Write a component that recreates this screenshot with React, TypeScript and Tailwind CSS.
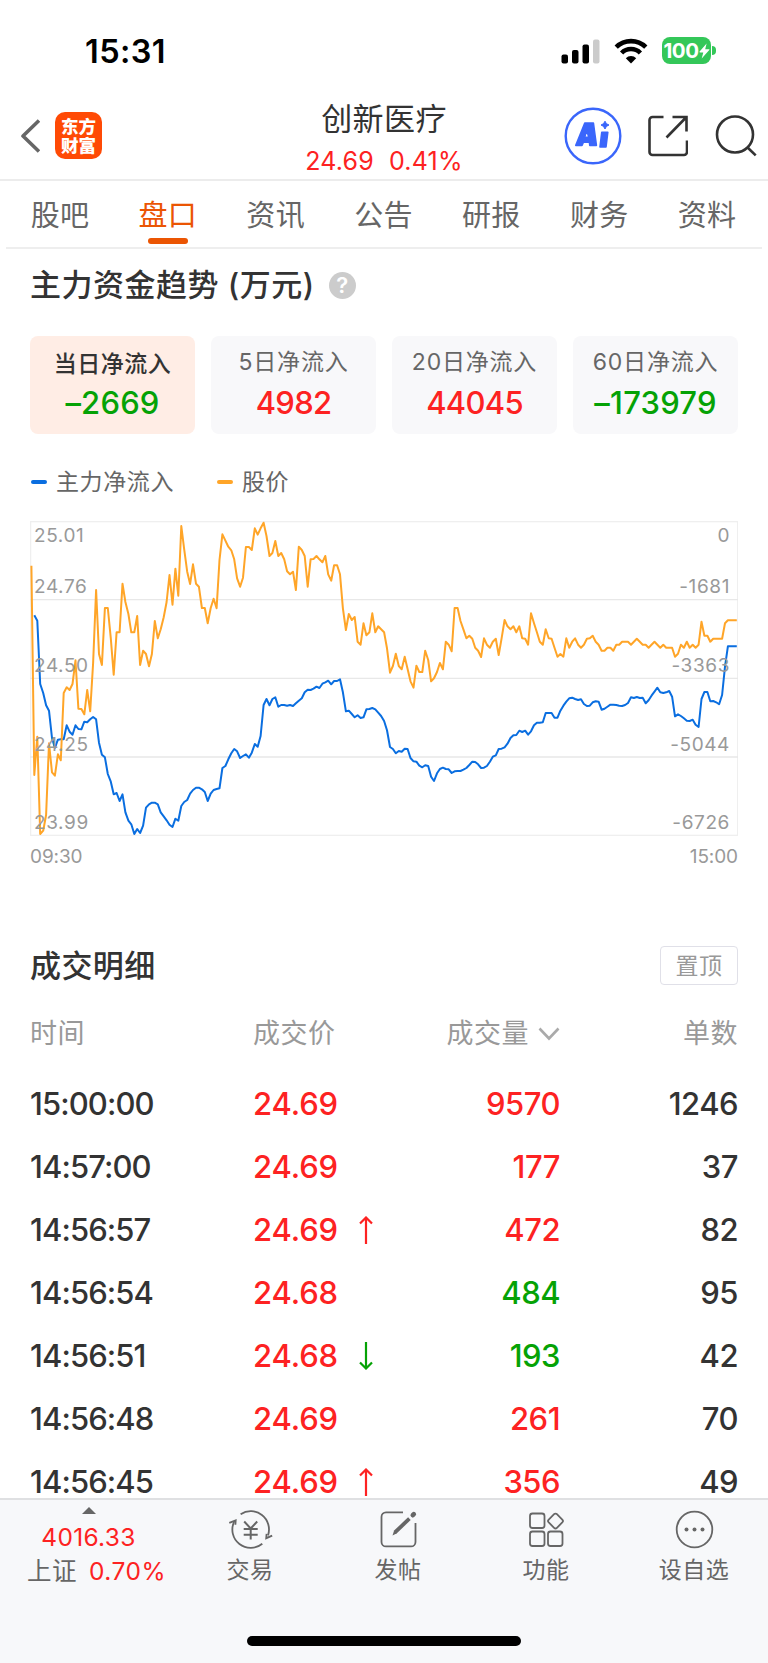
import type { ReactNode } from "react";
import clsx from "clsx";

const tabs = ["股吧", "盘口", "资讯", "公告", "研报", "财务", "资料"];

const flowCards = [
  { label: "当日净流入", value: "–2669", up: false, active: true },
  { label: "5日净流入", value: "4982", up: true, active: false },
  { label: "20日净流入", value: "44045", up: true, active: false },
  { label: "60日净流入", value: "–173979", up: false, active: false },
];

const trades = [
  { time: "15:00:00", price: "24.69", move: "", volume: "9570", buy: true, count: "1246" },
  { time: "14:57:00", price: "24.69", move: "", volume: "177", buy: true, count: "37" },
  { time: "14:56:57", price: "24.69", move: "up", volume: "472", buy: true, count: "82" },
  { time: "14:56:54", price: "24.68", move: "", volume: "484", buy: false, count: "95" },
  { time: "14:56:51", price: "24.68", move: "down", volume: "193", buy: false, count: "42" },
  { time: "14:56:48", price: "24.69", move: "", volume: "261", buy: true, count: "70" },
  { time: "14:56:45", price: "24.69", move: "up", volume: "356", buy: true, count: "49" },
];

// one value per trading minute, in chart units from the top
const priceSeries = [
  167, 795, 680, 972, 962, 915, 700, 787, 797, 733, 751, 549, 532, 540, 522, 451, 596, 597, 613, 540,
  604, 460, 240, 432, 465, 294, 294, 385, 494, 367, 367, 221, 276, 312, 367, 367, 318, 465, 422, 432,
  469, 432, 333, 385, 358, 322, 276, 195, 284, 176, 257, 48, 118, 185, 222, 163, 221, 230, 294, 294,
  340, 294, 266, 295, 150, 73, 92, 110, 121, 148, 205, 230, 203, 111, 111, 120, 55, 74, 55, 38,
  78, 138, 129, 93, 138, 129, 148, 184, 193, 185, 240, 110, 120, 138, 230, 148, 147, 138, 148, 157,
  138, 193, 212, 166, 166, 193, 295, 360, 312, 330, 321, 395, 404, 340, 376, 367, 310, 367, 349, 358,
  367, 415, 488, 468, 431, 468, 478, 440, 477, 514, 533, 467, 486, 486, 422, 450, 514, 505, 486, 459,
  478, 395, 404, 424, 294, 294, 333, 358, 385, 377, 386, 413, 422, 441, 385, 404, 413, 395, 386, 435,
  385, 330, 349, 358, 349, 367, 349, 385, 386, 404, 310, 340, 367, 395, 404, 358, 385, 386, 413, 440,
  432, 440, 385, 413, 395, 385, 404, 413, 404, 386, 385, 377, 395, 404, 422, 422, 413, 413, 422, 404,
  404, 395, 395, 395, 404, 395, 386, 395, 404, 404, 413, 404, 395, 404, 413, 404, 413, 413, 413, 440,
  431, 404, 413, 395, 413, 404, 413, 404, 335, 377, 377, 395, 386, 386, 386, 386, 340, 331, 331, 331,
  331,
];

const flowSeries = [
  316, 332, 522, 549, 586, 602, 684, 714, 689, 688, 688, 646, 665, 674, 646, 657, 658, 635, 637, 628,
  621, 628, 698, 734, 742, 792, 815, 853, 849, 873, 853, 907, 932, 943, 972, 957, 969, 947, 893, 883,
  878, 878, 883, 907, 919, 931, 944, 951, 926, 932, 888, 876, 870, 851, 840, 833, 833, 838, 846, 873,
  851, 840, 837, 835, 774, 768, 748, 730, 717, 724, 744, 738, 733, 743, 728, 702, 710, 678, 585, 567,
  586, 567, 562, 590, 585, 585, 587, 585, 588, 580, 572, 565, 547, 539, 540, 536, 530, 534, 521, 517,
  512, 523, 513, 513, 508, 547, 604, 602, 612, 622, 616, 624, 622, 598, 597, 594, 598, 608, 618, 633,
  661, 711, 717, 730, 723, 725, 716, 717, 744, 754, 755, 767, 772, 766, 768, 800, 813, 790, 777, 773,
  777, 778, 789, 784, 783, 783, 779, 774, 765, 755, 756, 763, 774, 773, 768, 755, 740, 736, 717, 716,
  712, 701, 684, 676, 675, 662, 666, 662, 674, 664, 646, 638, 638, 637, 609, 609, 609, 623, 623, 602,
  587, 575, 565, 563, 567, 570, 568, 582, 588, 587, 577, 574, 575, 599, 596, 590, 584, 584, 585, 587,
  588, 585, 579, 562, 564, 561, 564, 563, 580, 571, 557, 545, 533, 547, 549, 547, 543, 560, 619, 613,
  618, 625, 632, 633, 629, 644, 651, 567, 546, 546, 574, 573, 577, 583, 555, 470, 409, 409, 409, 409,
];

const toPoints = (series: number[], start: number) =>
  series
    .map((y, i) => `${(1.4 + (i + start) * 2.939).toFixed(1)},${((y - 33) / 3).toFixed(1)}`)
    .join(" ");

const StatusBar = () => (
  <div className="flex h-24 items-start justify-between pt-8 pr-[52px] pl-[85px]">
    <span className="pt-[1px] text-[32.5px] leading-[38px] font-semibold tracking-[0.4px] text-black">15:31</span>
    <div className="flex items-center pt-[5px]">
      <svg className="mr-[13px]" width="40" height="26" viewBox="0 0 40 26">
        <rect x="0.5" y="16.5" width="6.5" height="9" rx="2" />
        <rect x="11" y="12" width="6.5" height="13.5" rx="2" />
        <rect x="21.5" y="6.5" width="6.5" height="19" rx="2" />
        <rect x="32" y="1.5" width="6.5" height="24" rx="2" fill="#cbcbcb" />
      </svg>
      <svg className="mr-[14px]" width="34" height="26" viewBox="0 0 34 26">
        <g fill="none" stroke="#000" strokeWidth="4.6">
          <path d="M2.2 9.2a21 21 0 0 1 29.6 0" />
          <path d="M7.6 15a13.2 13.2 0 0 1 18.8 0" />
        </g>
        <path d="M11.8 20.2a7.4 7.4 0 0 1 10.4 0L17 25.5z" />
      </svg>
      <div className="flex items-center gap-[1px]">
        <div className="flex h-[27px] w-[49px] items-center justify-center rounded-[8px] bg-[#34c759] text-white">
          <span className="text-[20.5px] leading-[27px] font-bold tracking-[-0.5px]">100</span>
          <svg width="11" height="16" viewBox="0 0 11 16" fill="currentColor">
            <path d="M7.6 0.4 0.6 8.6c-.3.4-.1.8.4.8h3.3L2.7 15.4l7.6-8.3c.3-.4.1-.8-.4-.8H6.2z" />
          </svg>
        </div>
        <span className="h-[9px] w-[4px] rounded-r-full bg-[#34c759]" />
      </div>
    </div>
  </div>
);

const Header = () => (
  <header className="grid h-[85px] grid-cols-[1fr_auto_1fr] border-b-2 border-[#ececec]">
    <div className="flex items-start gap-[15px] pt-4 pl-[20px]">
      <svg className="mt-[6px]" width="20" height="36" viewBox="0 0 20 36" fill="none" stroke="#666" strokeWidth="3.6">
        <path d="M19 2.5 3 18l16 15.5" strokeLinejoin="round" />
      </svg>
      <div className="flex h-[47px] w-[47px] flex-col items-center justify-center rounded-[10px] bg-[#ff4a05] text-[17.5px] leading-[19px] font-black text-white">
        <span>东方</span>
        <span>财富</span>
      </div>
    </div>
    <div className="flex flex-col items-center pt-[3px]">
      <h1 className="text-[31px] leading-[40px] tracking-[0.4px] text-[#333]">创新医疗</h1>
      <div className="flex gap-[15px] pt-[6px] text-[25px] leading-[32px] tracking-[0.2px] text-[#fd2222]">
        <span>24.69</span>
        <span>0.41%</span>
      </div>
    </div>
    <div className="flex items-start justify-end pt-[11px] pr-[11px]">
      <svg width="58" height="58" viewBox="0 0 58 58">
        <circle cx="29" cy="29" r="27.3" fill="none" stroke="#3a66fb" strokeWidth="2.4" />
        <g fill="#3a66fb" stroke="#3a66fb" strokeWidth="1.6" strokeLinejoin="round">
          <path fillRule="evenodd" d="M20.8 16h8.6L32.4 38.4h-6.6l-.4-3.2h-6l-1.4 3.2H11.8zM22.8 23.4l-2.2 6.8h4.2z" />
          <path d="M37.8 25.2h6L42 40h-6z" />
          <path d="M41 14.2l1.4 2.5 2.6 1.3-2.6 1.4L41 22l-1.5-2.6L37 18l2.5-1.3z" strokeWidth="1" />
        </g>
      </svg>
      <svg className="mt-[8px] ml-[26px]" width="40" height="42" viewBox="0 0 40 42" fill="none" stroke="#333" strokeWidth="2.6">
        <path d="M15.5 2H4.5a3 3 0 0 0-3 3v32a3 3 0 0 0 3 3h31.5a3 3 0 0 0 3-3V25.5" />
        <path d="M24.5 2H38.5V16.5M38.5 2 18.5 22.5" />
      </svg>
      <svg className="mt-[7px] ml-[27px]" width="42" height="43" viewBox="0 0 42 43" fill="none" stroke="#333" strokeWidth="2.6">
        <circle cx="20" cy="20.5" r="18" />
        <path d="M32.3 33.2l8.4 8.2" />
      </svg>
    </div>
  </header>
);

const Tabs = () => (
  <nav className="mr-[6px] ml-[6px] flex h-[68px] border-b-2 border-[#eee] pr-[1px]">
    {tabs.map((tab) => (
      <div
        key={tab}
        className={clsx(
          "flex flex-1 flex-col items-center pt-[15px] text-[29px] leading-10 tracking-[0.3px]",
          tab === "盘口" ? "text-[#eb5503]" : "text-[#666]"
        )}
      >
        {tab}
        {tab === "盘口" && <span className="mt-[2px] h-[6px] w-10 rounded-full bg-[#eb5503]" />}
      </div>
    ))}
  </nav>
);

const FlowCards = () => (
  <div className="grid grid-cols-4 gap-4 pt-[31px]">
    {flowCards.map((card) => (
      <div
        key={card.label}
        className={clsx(
          "flex h-[98px] flex-col items-center rounded-lg",
          card.active ? "bg-[#ffede5] pt-[13px]" : "bg-[#f8f8fa] pt-[11px]"
        )}
      >
        <span
          className={clsx(
            "text-[23px] leading-[30px]",
            card.active ? "font-medium tracking-[0.5px] text-[#333]" : "tracking-[0.8px] text-[#666]"
          )}
        >
          {card.label}
        </span>
        <span
          className={clsx(
            "text-[31px] leading-9 font-medium",
            card.active ? "mt-[6px]" : "mt-[8px]",
            card.up ? "tracking-[-0.7px] text-[#fd2222]" : "tracking-[0.2px] text-[#05a205]"
          )}
        >
          {card.value}
        </span>
      </div>
    ))}
  </div>
);

const Chart = () => (
  <div className="pt-[23px]">
    <div className="relative h-[315px] text-[19px] leading-6 text-[#999]">
      <svg className="block" width="708" height="315" viewBox="0 0 708 315" fill="none">
        <g stroke="#e8e8e8" strokeWidth="1.3">
          <rect x="0.6" y="0.7" width="707" height="313.6" stroke="#efefef" />
          <path d="M0 78.6H708M0 157.3H708M0 236H708" />
        </g>
        <polyline points={toPoints(flowSeries, 1)} stroke="#0a6ee0" strokeWidth="2" strokeLinejoin="round" />
        <polyline points={toPoints(priceSeries, 0)} stroke="#ffa528" strokeWidth="2" strokeLinejoin="round" />
      </svg>
      {/* axis labels lie over the lines */}
      <div className="absolute inset-0 flex justify-between pr-[8px] pl-[4px] tracking-[0.6px]">
        <div className="flex flex-col pt-[3px]">
          <span>25.01</span>
          <span className="pt-[27px]">24.76</span>
          <span className="pt-[55px]">24.50</span>
          <span className="pt-[55px]">24.25</span>
          <span className="pt-[54px]">23.99</span>
        </div>
        <div className="flex flex-col items-end pt-[3px]">
          <span>0</span>
          <span className="pt-[27px]">-1681</span>
          <span className="pt-[55px]">-3363</span>
          <span className="pt-[55px]">-5044</span>
          <span className="pt-[54px]">-6726</span>
        </div>
      </div>
    </div>
    <div className="flex justify-between pt-[9px] text-[19px] leading-6 tracking-[-0.1px] text-[#999]">
      <span>09:30</span>
      <span>15:00</span>
    </div>
  </div>
);

const MoveArrow = ({ move }: { move: string }) => (
  <svg
    className={clsx("ml-[21px]", move === "up" ? "text-[#fd2222]" : "rotate-180 text-[#05a205]")}
    width="14"
    height="28"
    viewBox="0 0 14 28"
    fill="none"
    stroke="currentColor"
    strokeWidth="2.2"
  >
    <path d="M7 28V2M1 7.5 7 1.5l6 6" />
  </svg>
);

const Trades = () => (
  <section className="px-[30px] pt-[77px]">
    <div className="flex h-[39px] items-center justify-between">
      <h2 className="text-[31px] leading-10 font-medium tracking-[0.4px] text-[#333]">成交明细</h2>
      <button className="h-[39px] w-[78px] rounded-[4px] border border-[#e0e0e8] text-[23px] leading-9 tracking-[0.5px] text-[#999]">
        置顶
      </button>
    </div>
    <div className="mt-[29px] grid grid-cols-[223px_147px_160px_178px] text-[27px] leading-10 tracking-[0.5px] text-[#999]">
      <span>时间</span>
      <span>成交价</span>
      <span className="flex items-center justify-end gap-[9px]">
        成交量
        <svg width="22" height="14" viewBox="0 0 22 14" fill="none" stroke="#aaa" strokeWidth="2.6">
          <path d="M1.5 1.5 11 11.5l9.5-10" />
        </svg>
      </span>
      <span className="text-right">单数</span>
    </div>
    <div className="mt-[18px] h-[426px] overflow-hidden">
      {trades.map((trade) => (
        <div
          key={trade.time}
          className="grid h-[63px] grid-cols-[223px_147px_160px_178px] items-center text-[31px] leading-9 font-medium tracking-[-0.5px] text-[#333]"
        >
          <span className="tracking-[-0.9px]">{trade.time}</span>
          <span className="flex items-center tracking-[-0.1px] text-[#fd2222]">
            {trade.price}
            {trade.move && <MoveArrow move={trade.move} />}
          </span>
          <span className={clsx("text-right", trade.buy ? "text-[#fd2222]" : "text-[#05a205]")}>{trade.volume}</span>
          <span className="text-right">{trade.count}</span>
        </div>
      ))}
    </div>
  </section>
);

const NavItem = ({ label, children }: { label: string; children: ReactNode }) => (
  <div className="flex w-[148px] flex-col items-center pt-[9px] text-[23px] leading-8 tracking-[0.5px] text-[#666]">
    <svg width="45" height="42" viewBox="0 0 45 42" fill="none" stroke="#666" strokeWidth="1.8">
      {children}
    </svg>
    <span className="pt-[3px]">{label}</span>
  </div>
);

const BottomBar = () => (
  <footer className="h-[165px] border-t-2 border-[#dfe0e2] bg-[#f7f8fa]">
    <div className="flex h-[136px]">
      <div className="flex w-44 flex-col items-center pt-[7px] pl-[1px] text-[#fd2222]">
        <svg width="14" height="7" viewBox="0 0 14 7" fill="#666">
          <path d="M7 0l7 7H0z" />
        </svg>
        <span className="pt-[8px] text-[24.5px] leading-[30px] tracking-[0.3px]">4016.33</span>
        <div className="flex gap-[12px] pt-[4px] pl-4 text-[24.5px] leading-[30px] tracking-[0.5px]">
          <span className="text-[#666]">上证</span>
          <span>0.70%</span>
        </div>
      </div>
      <NavItem label="交易">
        <path d="M12.6 5.2A18.3 18.3 0 0 1 40 26.4M34.3 34.7A18.3 18.3 0 0 1 6.1 12.8" />
        <path d="M1.3 13.8l6.4-2.4-.3 4.4M44.2 26.6l-6 2.6.4-4.4" />
        <path d="M16.2 12.5l6.5 7 6.5-7M22.7 19.5V30.5M15.7 20h14M15.7 25.8h14" strokeWidth="2" />
      </NavItem>
      <NavItem label="发帖">
        <path d="M27 3.4H10a4.5 4.5 0 0 0-4.5 4.5v25A4.5 4.5 0 0 0 10 37.4h25a4.5 4.5 0 0 0 4.5-4.5V14" />
        <path d="M16.5 26.5l1.6-5 14-13.2 2.6 2.7-13.8 13.2z" fill="#666" stroke="none" />
        <path d="M36.8 6.2l1-1" strokeWidth="4.6" strokeLinecap="round" />
      </NavItem>
      <NavItem label="功能">
        <rect x="6" y="4.5" width="14.5" height="14.5" rx="2.5" />
        <rect x="6" y="22.5" width="14.5" height="14.5" rx="2.5" />
        <rect x="24" y="22.5" width="14.5" height="14.5" rx="2.5" />
        <rect x="25.7" y="6.2" width="11.6" height="11.6" rx="2" transform="rotate(45 31.5 12)" />
      </NavItem>
      <NavItem label="设自选">
        <circle cx="22.5" cy="20.5" r="17.8" />
        <g fill="#666" stroke="none">
          <circle cx="14.5" cy="20.5" r="2" />
          <circle cx="22.5" cy="20.5" r="2" />
          <circle cx="30.5" cy="20.5" r="2" />
        </g>
      </NavItem>
    </div>
    <div className="mx-auto h-[10px] w-[274px] rounded-full bg-black" />
  </footer>
);

const App = () => {
  return (
    <div className="flex h-[1663px] w-[768px] flex-col overflow-hidden bg-white font-['Inter','Noto_Sans_CJK_SC',sans-serif]">
      <StatusBar />
      <Header />
      <Tabs />
      <section className="px-[30px] pt-4">
        <div className="flex items-center gap-[14px]">
          <h2 className="text-[31px] leading-10 font-medium tracking-[0.5px] text-[#333]">主力资金趋势 (万元)</h2>
          <span className="h-[27px] w-[27px] rounded-full bg-[#ccc] text-center text-[22px] leading-[27px] font-semibold text-white">
            ?
          </span>
        </div>
        <FlowCards />
        <div className="flex items-center pt-8 text-[23px] leading-8 tracking-[0.6px] text-[#666]">
          <span className="mr-[9px] ml-[1px] h-1 w-4 rounded-full bg-[#0a6ee0]" />
          主力净流入
          <span className="mr-[9px] ml-[43px] h-1 w-4 rounded-full bg-[#ffa528]" />
          股价
        </div>
        <Chart />
      </section>
      <Trades />
      <BottomBar />
    </div>
  );
};

export default App;
